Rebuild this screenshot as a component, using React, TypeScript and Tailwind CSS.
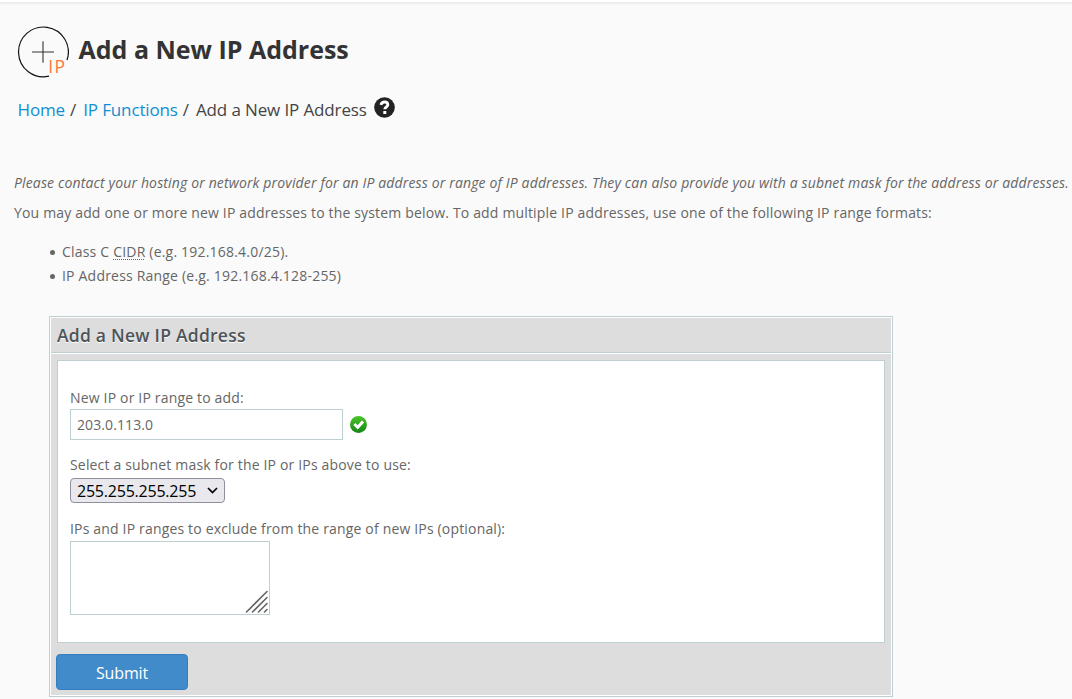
export default function App() {
  return (
    <div className="flex h-[699px] w-full flex-col overflow-hidden bg-[#fafafa] font-['Open_Sans',sans-serif] text-[14px] text-[#666]">
      <div className="h-[2px] shrink-0 bg-white" />
      <div className="h-[3px] shrink-0 bg-gradient-to-b from-[#e9e9e9] to-[#fafafa]" />
      <header className="flex h-[93px] shrink-0 flex-col pl-[17px]">
        <div className="flex h-[73px] items-start pt-[20px]">
          <svg width="52" height="54" viewBox="0 0 52 54" fill="none" className="shrink-0">
            <path d="M50 35A24.9 24.9 0 1 0 32 51.2" stroke="#111" strokeWidth="1.2" />
            <path d="M15 27H37M26 16.3V37.8" stroke="#333" strokeWidth="1.1" />
            <text x="31.3" y="47.8" fontSize="17.5" letterSpacing="1.2" fill="#ff7540" fontFamily="Open Sans" fontWeight="400">IP</text>
          </svg>
          <h1 className="ml-[9.5px] mt-[7px] whitespace-nowrap text-[25px] leading-[34px] font-bold text-[#333]">Add a New IP Address</h1>
        </div>
      </header>
      <nav className="flex h-[24px] shrink-0 items-center whitespace-nowrap pl-[17.5px] text-[17px] leading-[24px] tracking-[-0.13px] text-[#444]">
        <a className="text-[#0f8fd2]">Home</a>
        <span className="ml-[5px]">/</span>
        <a className="ml-[7px] text-[#0f8fd2]">IP Functions</a>
        <span className="ml-[5px]">/</span>
        <span className="ml-[7px]">Add a New IP Address</span>
        <svg width="21" height="21" viewBox="0 0 21 21" fill="none" className="ml-[7.5px] -mt-[6px]">
          <circle cx="10.5" cy="10.5" r="10.3" fill="#222" />
          <path d="M6.9 7.8C7.6 5.5 9 5 10.5 5C12.5 5 13.8 6.2 13.8 7.8C13.8 10 10.8 10 10.8 12.3" stroke="#fff" strokeWidth="2.9" />
          <path d="M9.3 14H12.3V17H9.3Z" fill="#fff" />
        </svg>
      </nav>
      <main className="flex flex-col pt-[50px]">
        <p className="h-[30px] whitespace-nowrap pl-[14px] leading-[22px] italic tracking-[0.146px]">Please contact your hosting or network provider for an IP address or range of IP addresses. They can also provide you with a subnet mask for the address or addresses.</p>
        <p className="h-[38px] whitespace-nowrap pl-[14px] leading-[22px] tracking-[0.165px]">You may add one or more new IP addresses to the system below. To add multiple IP addresses, use one of the following IP range formats:</p>
        <ul className="flex h-[76px] flex-col pl-[50px] leading-[24px] tracking-[0.2px]">
          <li className="flex items-center"><i className="mr-[7px] mt-px size-[5px] rounded-full bg-[#666]" /><span>Class C <abbr className="underline decoration-dotted decoration-1 underline-offset-[2px]">CIDR</abbr> (e.g. 192.168.4.0/25).</span></li>
          <li className="flex items-center"><i className="mr-[7px] mt-px size-[5px] rounded-full bg-[#666]" /><span>IP Address Range (e.g. 192.168.4.128-255)</span></li>
        </ul>
        <section className="ml-[49px] h-[381px] w-[844px] border border-[#bdcfd1] bg-white p-px">
          <div className="flex h-full flex-col bg-[#ddd]">
            <h2 className="h-[36px] shrink-0 border-b border-white pl-[6px] text-[17.5px] leading-[34px] font-semibold tracking-[0.24px] text-[#4d5356] shadow-[inset_0_-1px_0_#bdcfd1] [text-shadow:0_1px_0_#fff]">Add a New IP Address</h2>
            <form className="mx-[6px] mt-[6px] flex h-[283px] w-[828px] shrink-0 flex-col items-start border border-[#bdcfd1] bg-white pl-[12px] pt-[26px] tracking-[0.17px]">
              <label className="h-[22px] leading-[22px]">New IP or IP range to add:</label>
              <div className="flex h-[45px] items-start">
                <input defaultValue="203.0.113.0" className="h-[31px] w-[273px] border border-[#bdcfd1] bg-white px-[6px] text-[14px] tracking-[0.1px] outline-none" />
                <svg width="18" height="18" viewBox="0 0 18 18" fill="none" className="ml-[7px] mt-[7px]">
                  <defs><linearGradient id="g" x1="0" y1="0" x2="0" y2="1"><stop stopColor="#4cc52c" /><stop offset="1" stopColor="#168416" /></linearGradient></defs>
                  <circle cx="8.5" cy="8.5" r="8.5" fill="url(#g)" />
                  <path d="M4.3 8L7.7 11.3L13 5.6" stroke="#fff" strokeWidth="3" />
                </svg>
              </div>
              <label className="h-[24px] leading-[22px]">Select a subnet mask for the IP or IPs above to use:</label>
              <button type="button" className="flex h-[25px] w-[155px] items-center rounded-[4px] border border-[#8f8f9d] bg-[#e9e9ed] pl-[6px] text-[16px] leading-none tracking-[-0.22px] text-black">
                <span className="w-[129.5px] text-left">255.255.255.255</span>
                <svg width="11" height="7" viewBox="0 0 11 7" fill="none"><path d="M1 1L5.5 5.5L10 1" stroke="#000" strokeWidth="1.7" /></svg>
              </button>
              <label className="mt-[15px] h-[23px] leading-[22px]">IPs and IP ranges to exclude from the range of new IPs (optional):</label>
              <div className="flex h-[74px] w-[200px] items-end justify-end border border-[#bdcfd1] pr-[1px] pb-[1px]">
                <svg width="23" height="23" viewBox="0 0 23 23" stroke="#666" strokeWidth="1.6" strokeLinecap="round"><path d="M1.5 22L22 1.5M7.5 22L22 7.5M13.5 22L22 13.5M19.5 22L22 19.5" /></svg>
              </div>
            </form>
            <button className="ml-[5px] mt-[11px] h-[36px] w-[132px] rounded-[4px] border border-[#357ebd] bg-[#428bca] pt-[2px] text-[16px] tracking-[-0.15px] text-white">Submit</button>
          </div>
        </section>
      </main>
    </div>
  );
}
